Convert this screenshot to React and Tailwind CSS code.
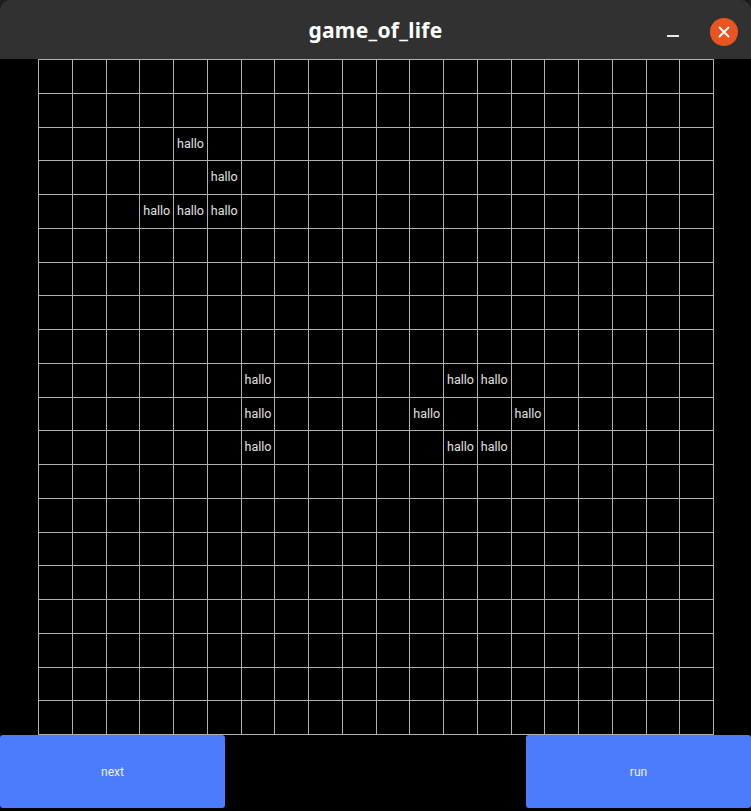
import React from "react";

const alive = new Set([
  "2-4", "3-5", "4-3", "4-4", "4-5",
  "9-6", "9-12", "9-13",
  "10-6", "10-11", "10-14",
  "11-6", "11-12", "11-13",
]);

export default function App() {
  const rows = Array.from({ length: 20 }, (_, r) => r);
  const cols = Array.from({ length: 20 }, (_, c) => c);
  return (
    <div className="w-[751px] h-[811px] bg-black flex flex-col overflow-hidden" style={{ fontFamily: "Roboto, 'Liberation Sans', sans-serif" }}>
      <div className="bg-[#1c1c1c] h-[59px] shrink-0">
        <div className="h-[59px] bg-[#313131] rounded-t-[10px] flex items-center relative">
          <div className="flex-1 text-center text-white text-[21px] font-bold tracking-[0.3px] pt-[3px]" style={{ fontFamily: "'Noto Sans', 'DejaVu Sans', sans-serif" }}>
            game_of_life
          </div>
          <div className="absolute left-[667px] top-[35px] w-[12px] h-[2px] bg-[#e8e8e8]" />
          <div className="absolute left-[710px] top-[18px] w-[28px] h-[28px] rounded-full bg-[#e95420] flex items-center justify-center">
            <svg width="12" height="12" viewBox="0 0 12 12">
              <path d="M1.5 1.5 L10.5 10.5 M10.5 1.5 L1.5 10.5" stroke="white" strokeWidth="1.8" strokeLinecap="round" />
            </svg>
          </div>
        </div>
      </div>
      <div className="h-[676px] shrink-0 pl-[38px]">
        <div className="grid grid-cols-[repeat(20,33.75px)] grid-rows-[repeat(20,33.75px)] border-l border-t border-[#b0b0b0] w-[676px]">
          {rows.map((r) =>
            cols.map((c) => (
              <div key={`${r}-${c}`} className="border-r border-b border-[#b0b0b0] flex items-center pl-[3px] text-[12.5px] text-[#e0e0e0]">
                {alive.has(`${r}-${c}`) ? "hallo" : ""}
              </div>
            ))
          )}
        </div>
      </div>
      <div className="h-[73px] shrink-0 flex justify-between">
        <button className="w-[225px] h-full bg-[#4a7cfc] rounded-[3px] text-[12px] text-[#f0f0f0]">next</button>
        <button className="w-[225px] h-full bg-[#4a7cfc] rounded-[3px] text-[12px] text-[#f0f0f0]">run</button>
      </div>
    </div>
  );
}
